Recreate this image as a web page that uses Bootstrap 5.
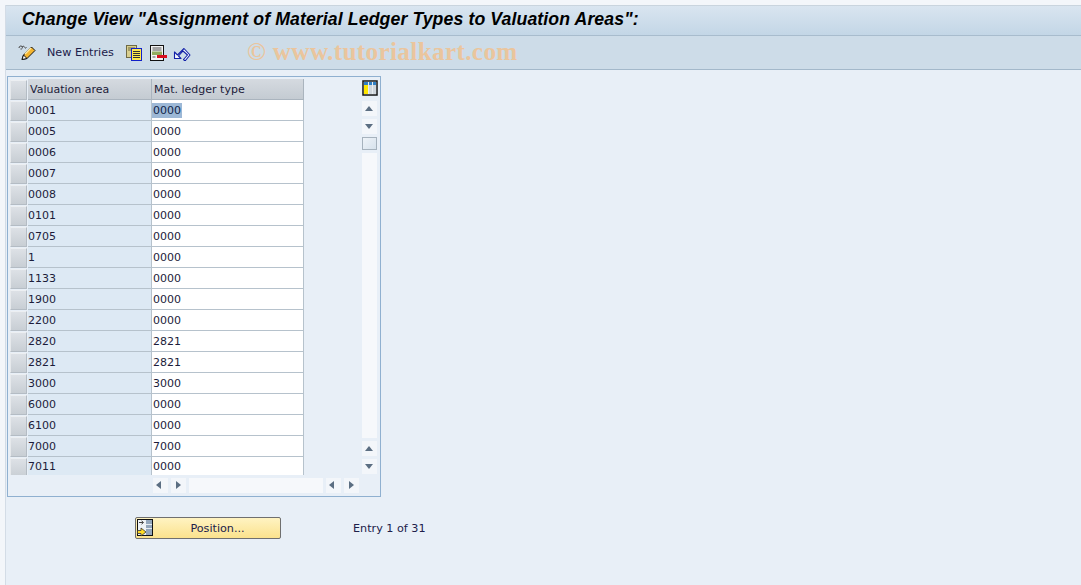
<!DOCTYPE html>
<html lang="en">
<head>
<meta charset="utf-8">
<title>Change View</title>
<link href="https://cdn.jsdelivr.net/npm/bootstrap@5.3.0/dist/css/bootstrap.min.css" rel="stylesheet">
<style>
html,body{height:585px;overflow:hidden}
body{background:#f3f6fa;padding:5px 0 0 5px;font:11px/1 "DejaVu Sans",sans-serif;color:#1c1c3a}
.sap-shell{height:580px;background:#e8eff7;border-left:1px solid #d3dce6}
.sap-title{height:31px;padding:0 0 2px 16px;background:linear-gradient(#d9e5f0,#c3d6e6);border-top:1px solid #c9d4de;border-bottom:1px solid #a8bccd}
.sap-title h1{margin:0;font:italic 700 17.7px/1 "Liberation Sans",sans-serif;color:#000;letter-spacing:.1px}
.sap-tools{height:34px;padding-left:12px;background:#cddce8;border-bottom:1px solid #a3b8ca;position:relative}
.sap-tools .lbl{margin:0 12px 0 11px;font-size:11.2px;color:#20204a}
.sap-tools svg{display:block}
.sap-gap7{margin-right:7px}
.sap-gap6{margin-right:6px}
.sap-mark{position:absolute;left:241px;top:2px;font:700 25.2px/1.1 "Liberation Serif",serif;color:#eac59d;letter-spacing:.35px;white-space:nowrap}
.sap-panel{width:374px;height:421px;margin:6px 0 0 1px;border:1px solid #8fb0d0;padding:2px 2px 0 2px}
.sap-tbl{width:294px;border-collapse:separate;border-spacing:0;table-layout:fixed}
.sap-tbl th{height:21px;padding:0 0 0 2px;font-weight:400;font-size:11px;background:linear-gradient(#d5dae0,#c4cbd2);border-right:1px solid #aab4be;border-bottom:1px solid #aab4be}
.sap-tbl td{height:21px;padding:0 0 0 1px;border-bottom:1px solid #b6c2cc;font-size:11px}
.sap-tbl td.k{padding-left:0;background:#dde9f4;border-right:1px solid #b6c2cc}
.sap-tbl td.v{background:#fff;border-right:1px solid #b6c2cc}
.sap-tbl tr:last-child td.k,.sap-tbl tr:last-child td.v{padding-bottom:2px}
.sap-tbl td.s,.sap-tbl th.s{padding:0;background:#e8eff7;border-bottom:0;border-right:1px solid #e8eff7}
.sap-tbl i.sel{display:block;width:17px;height:20px;background:linear-gradient(#dde1e6,#c8ced4);border:1px solid #b4bcc4;border-top-color:#eceff2;border-left-color:#e6e9ec}
.sap-tbl .hi{background:#9db8d6;color:#10244a;padding:1px 1px;margin-left:-1px}
.sap-clip{height:396px;overflow:hidden}
.sap-vs{width:16px;margin-left:58px;height:396px;gap:3px;padding-bottom:1px}
.sap-cfg{margin:1px 0 2px;background:#c9d2da}
.sap-btn{width:15px;height:15px;background:#f3f6fa;position:relative;flex:none}
.sap-btn::after{content:"";position:absolute;border:4px solid transparent}
.up::after{left:3px;top:5px;border-bottom:5px solid #5b6e82;border-top:0}
.dn::after{left:3px;top:5px;border-top:5px solid #5b6e82;border-bottom:0}
.lf::after{left:3px;top:3px;border-right:5px solid #5b6e82;border-left:0}
.rt::after{left:5px;top:3px;border-left:5px solid #5b6e82;border-right:0}
.sap-thumb{width:15px;height:13px;flex:none;background:linear-gradient(135deg,#eef3f8,#d7e2ec);border:1px solid #a6b2bd}
.sap-track{background:#f6f8fb}
.sap-vs .sap-track{width:15px}
.sap-hs{height:15px;margin:3px 0 0 143px;gap:3px}
.sap-htrack{width:134px}
.sap-bottom{margin:20px 0 0 129px}
.sap-pos{width:146px;height:22px;border:1px solid #6f6f6f;border-radius:2px;background:linear-gradient(#fff3c2,#fbe28d);position:relative;font-size:11.2px;color:#20204a;padding:1px 0 0 19px;text-align:center}
.sap-pos svg{position:absolute;left:1px;top:1px}
.sap-cnt{margin-left:72px;padding-top:2px;font-size:11.2px;color:#20204a}
</style>
</head>
<body>
<div class="sap-shell">
  <div class="sap-title d-flex align-items-center"><h1>Change View "Assignment of Material Ledger Types to Valuation Areas":</h1></div>
  <div class="sap-tools d-flex align-items-center">
    <svg width="18" height="17" viewBox="0 0 18 17"><path d="M1 4c0-2 2-2.500 3-1.500s0 3-1.500 2.500M4 3c1-1 2-1 2.500 0s1 1.500 2 .5" fill="none" stroke="#444"/><path d="M4 15.500l1.500-4.500 8-8 3.500 3.500-8 8z" fill="#f5b52e" stroke="#111"/><path d="M4 15.500l1.500-4.500 3.500 3.500z" fill="#fff" stroke="#111"/><path d="M7 10l6-6" stroke="#fde9a6" stroke-width="1.500"/></svg>
    <span class="lbl">New Entries</span>
    <svg width="17" height="16" viewBox="0 0 17 16" class="sap-gap7"><rect x=".5" y=".5" width="10" height="12" fill="#d9cf8f" stroke="#6f6a45"/><path d="M2 3h7M2 5h7" stroke="#6f6a45"/><rect x="5.500" y="3.500" width="10" height="12" fill="#ffe94d" stroke="#1220c8"/><path d="M7 6.500h7M7 8.500h7M7 10.500h7M7 12.500h7" stroke="#333"/></svg>
    <svg width="17" height="16" viewBox="0 0 17 16" class="sap-gap6"><rect x=".5" y=".5" width="13" height="15" fill="#f4f4f4" stroke="#111"/><path d="M2.500 3h9M2.500 5h9" stroke="#555"/><rect x="2" y="6.500" width="10" height="3.500" fill="#93ac5e"/><rect x="7" y="10" width="10" height="3" fill="#d80f1d"/><path d="M2.500 12h3" stroke="#555"/></svg>
    <svg width="18" height="16" viewBox="0 0 18 16"><path d="M1.500 7v6.500h6.500l-2.500-2.500 4.500-5 4.500 4-4 4.500 1.500 1.500 5-6-6-6.500-6.500 6.500-2-2z" fill="#f4f8fc" stroke="#1220a8" stroke-width="1.100" stroke-linejoin="round"/></svg>
    <span class="sap-mark">© www.tutorialkart.com</span>
  </div>
  <div class="sap-panel">
    <div class="d-flex">
      <div class="sap-clip">
        <table class="sap-tbl">
          <colgroup><col style="width:18px"><col style="width:124px"><col style="width:152px"></colgroup>
          <thead><tr><th class="s"><i class="sel"></i></th><th>Valuation area</th><th>Mat. ledger type</th></tr></thead>
          <tbody>
            <tr><td class="s"><i class="sel"></i></td><td class="k">0001</td><td class="v"><span class="hi">0000</span></td></tr>
            <tr><td class="s"><i class="sel"></i></td><td class="k">0005</td><td class="v">0000</td></tr>
            <tr><td class="s"><i class="sel"></i></td><td class="k">0006</td><td class="v">0000</td></tr>
            <tr><td class="s"><i class="sel"></i></td><td class="k">0007</td><td class="v">0000</td></tr>
            <tr><td class="s"><i class="sel"></i></td><td class="k">0008</td><td class="v">0000</td></tr>
            <tr><td class="s"><i class="sel"></i></td><td class="k">0101</td><td class="v">0000</td></tr>
            <tr><td class="s"><i class="sel"></i></td><td class="k">0705</td><td class="v">0000</td></tr>
            <tr><td class="s"><i class="sel"></i></td><td class="k">1</td><td class="v">0000</td></tr>
            <tr><td class="s"><i class="sel"></i></td><td class="k">1133</td><td class="v">0000</td></tr>
            <tr><td class="s"><i class="sel"></i></td><td class="k">1900</td><td class="v">0000</td></tr>
            <tr><td class="s"><i class="sel"></i></td><td class="k">2200</td><td class="v">0000</td></tr>
            <tr><td class="s"><i class="sel"></i></td><td class="k">2820</td><td class="v">2821</td></tr>
            <tr><td class="s"><i class="sel"></i></td><td class="k">2821</td><td class="v">2821</td></tr>
            <tr><td class="s"><i class="sel"></i></td><td class="k">3000</td><td class="v">3000</td></tr>
            <tr><td class="s"><i class="sel"></i></td><td class="k">6000</td><td class="v">0000</td></tr>
            <tr><td class="s"><i class="sel"></i></td><td class="k">6100</td><td class="v">0000</td></tr>
            <tr><td class="s"><i class="sel"></i></td><td class="k">7000</td><td class="v">7000</td></tr>
            <tr><td class="s"><i class="sel"></i></td><td class="k">7011</td><td class="v">0000</td></tr>
          </tbody>
        </table>
      </div>
      <div class="sap-vs d-flex flex-column">
        <svg width="16" height="16" viewBox="0 0 16 16" class="sap-cfg flex-shrink-0"><rect x="1" y="1" width="14" height="14" fill="#e8ecef" stroke="#111" stroke-width="1.400"/><rect x="2" y="2" width="4" height="12" fill="#ffe600"/><rect x="7" y="2" width="3" height="12" fill="#cfd6dc"/><rect x="11" y="2" width="3" height="12" fill="#cfd6dc"/><rect x="2" y="2" width="4" height="3" fill="#2f7fc4"/><rect x="7" y="2" width="3" height="3" fill="#2f7fc4"/><rect x="11" y="2" width="3" height="3" fill="#2f7fc4"/></svg>
        <div class="sap-btn up"></div>
        <div class="sap-btn dn"></div>
        <div class="sap-thumb"></div>
        <div class="sap-track flex-grow-1"></div>
        <div class="sap-btn up"></div>
        <div class="sap-btn dn"></div>
      </div>
    </div>
    <div class="sap-hs d-flex">
      <div class="sap-btn lf"></div><div class="sap-btn rt"></div>
      <div class="sap-track sap-htrack"></div>
      <div class="sap-btn lf"></div><div class="sap-btn rt"></div>
    </div>
  </div>
  <div class="sap-bottom d-flex align-items-center">
    <button type="button" class="sap-pos">
      <svg width="16" height="18" viewBox="0 0 16 18"><rect x=".5" y=".5" width="15" height="16" fill="#eef2f6" stroke="#111"/><rect x="9" y="1" width="6" height="15" fill="#93a6bb"/><path d="M9 5.500h6M9 9.500h6" stroke="#e6ecf2"/><path d="M2 3.500h4M4.500 1.800l2 1.700-2 1.700" fill="none" stroke="#444"/><path d="M.5 11.500h3.500v-2.500l5 4-5 4v-2.500h-3.500z" fill="#ffdc26" stroke="#333" stroke-width=".8"/></svg>
      Position...
    </button>
    <span class="sap-cnt">Entry 1 of 31</span>
  </div>
</div>
<script src="https://cdn.jsdelivr.net/npm/bootstrap@5.3.0/dist/js/bootstrap.bundle.min.js"></script>
</body>
</html>
